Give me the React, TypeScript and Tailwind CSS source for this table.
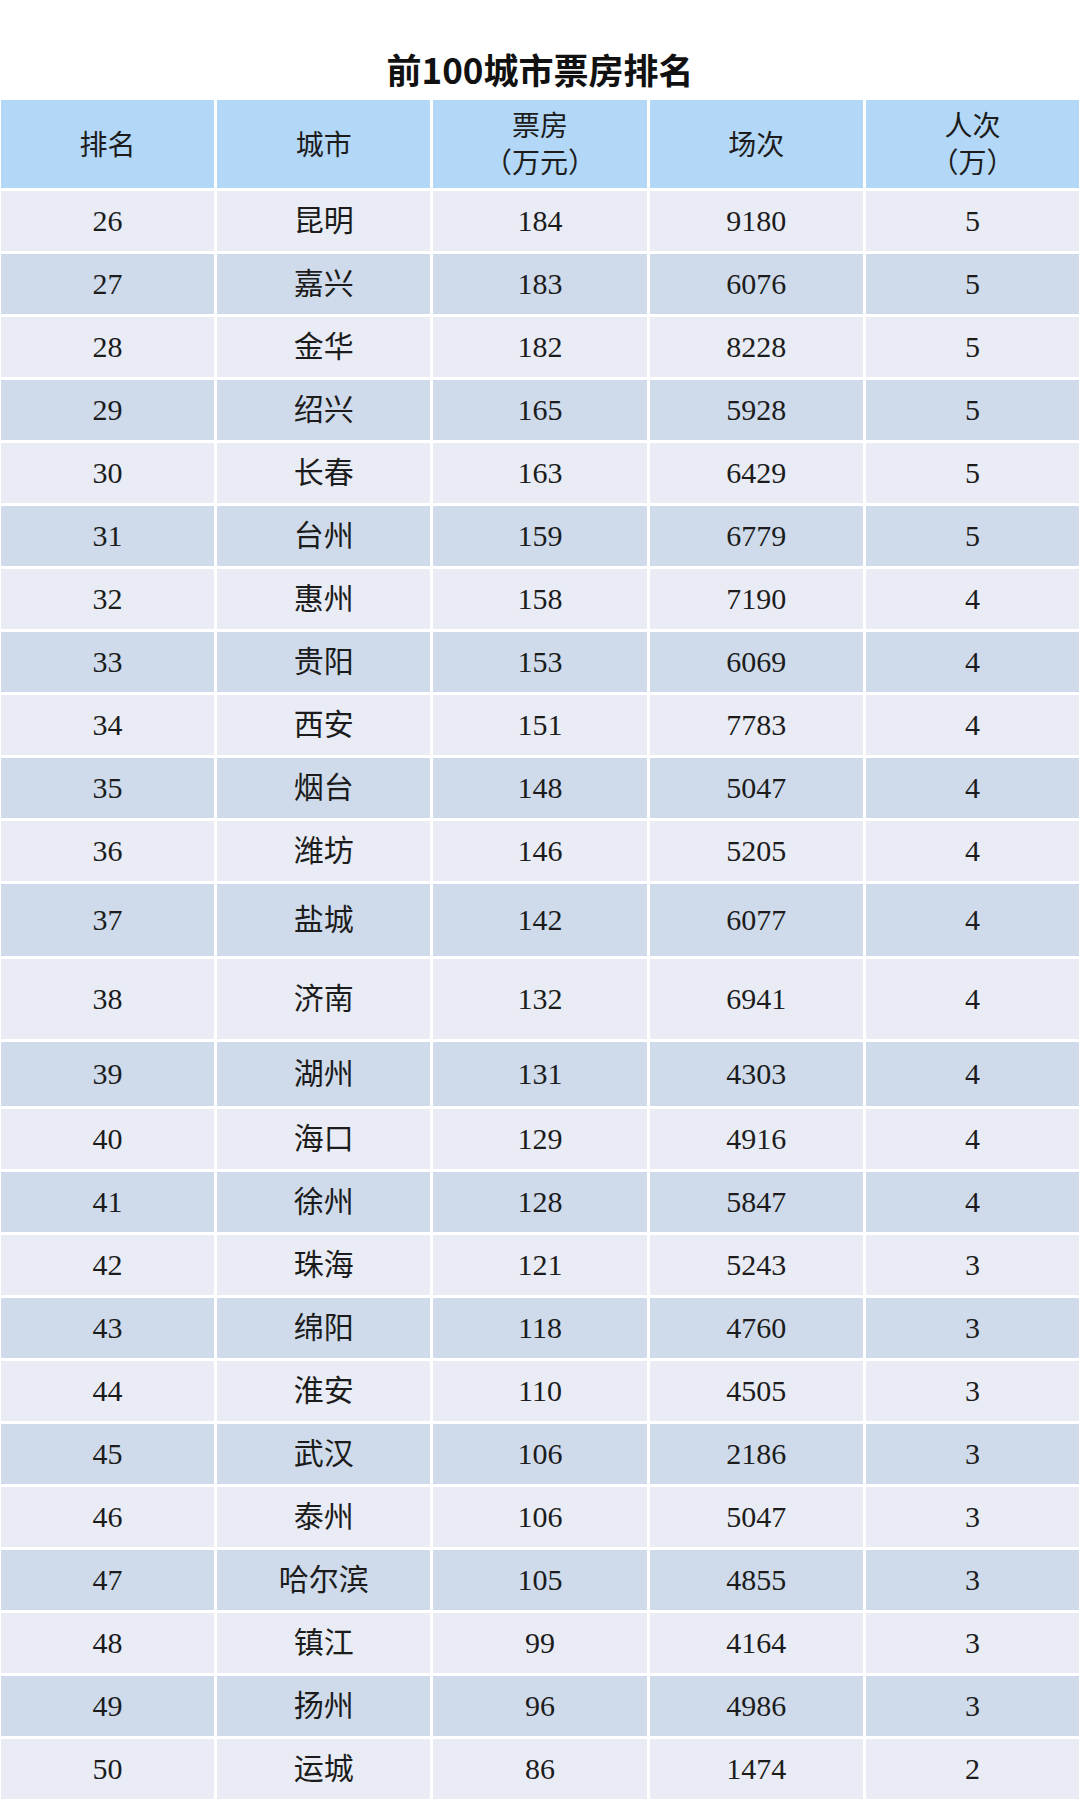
const rows = [
  { rank: 26, city: "昆明", box: 184, shows: 9180, people: 5 },
  { rank: 27, city: "嘉兴", box: 183, shows: 6076, people: 5 },
  { rank: 28, city: "金华", box: 182, shows: 8228, people: 5 },
  { rank: 29, city: "绍兴", box: 165, shows: 5928, people: 5 },
  { rank: 30, city: "长春", box: 163, shows: 6429, people: 5 },
  { rank: 31, city: "台州", box: 159, shows: 6779, people: 5 },
  { rank: 32, city: "惠州", box: 158, shows: 7190, people: 4 },
  { rank: 33, city: "贵阳", box: 153, shows: 6069, people: 4 },
  { rank: 34, city: "西安", box: 151, shows: 7783, people: 4 },
  { rank: 35, city: "烟台", box: 148, shows: 5047, people: 4 },
  { rank: 36, city: "潍坊", box: 146, shows: 5205, people: 4 },
  { rank: 37, city: "盐城", box: 142, shows: 6077, people: 4, h: "h-[72px]" },
  { rank: 38, city: "济南", box: 132, shows: 6941, people: 4, h: "h-[80px]" },
  { rank: 39, city: "湖州", box: 131, shows: 4303, people: 4, h: "h-[64px]" },
  { rank: 40, city: "海口", box: 129, shows: 4916, people: 4 },
  { rank: 41, city: "徐州", box: 128, shows: 5847, people: 4 },
  { rank: 42, city: "珠海", box: 121, shows: 5243, people: 3 },
  { rank: 43, city: "绵阳", box: 118, shows: 4760, people: 3 },
  { rank: 44, city: "淮安", box: 110, shows: 4505, people: 3 },
  { rank: 45, city: "武汉", box: 106, shows: 2186, people: 3 },
  { rank: 46, city: "泰州", box: 106, shows: 5047, people: 3 },
  { rank: 47, city: "哈尔滨", box: 105, shows: 4855, people: 3 },
  { rank: 48, city: "镇江", box: 99, shows: 4164, people: 3 },
  { rank: 49, city: "扬州", box: 96, shows: 4986, people: 3 },
  { rank: 50, city: "运城", box: 86, shows: 1474, people: 2 },
];

const headers = [["排名"], ["城市"], ["票房", "（万元）"], ["场次"], ["人次", "（万）"]];

export default function App() {
  return (
    <div className="w-[1080px] h-[1800px] bg-white overflow-hidden">
      <div className="h-[100px] flex justify-center pt-[51px]">
        <h1 className="text-[35px] leading-none font-bold text-[#111] font-['Noto_Sans_CJK_SC',sans-serif]">
          前100城市票房排名
        </h1>
      </div>

      <div className="flex flex-col gap-[3px] px-[1px] text-[#1c1c1c] font-['Liberation_Serif','Noto_Sans_CJK_SC',serif]">
        {/* header */}
        <div className="grid grid-cols-5 gap-x-[3px] h-[88px]">
          {headers.map((lines, i) => (
            <div
              key={i}
              className="bg-[#b3d7f7] flex flex-col items-center justify-center pt-[2px] text-[28px] leading-[37px]"
            >
              {lines.map((l) => (
                <span key={l}>{l}</span>
              ))}
            </div>
          ))}
        </div>

        {rows.map((r, idx) => {
          const bg = idx % 2 === 0 ? "bg-[#e9ecf5]" : "bg-[#cfdbeb]";
          const cells = [r.rank, r.city, r.box, r.shows, r.people];
          return (
            <div key={r.rank} className={`grid grid-cols-5 gap-x-[3px] ${r.h ?? "h-[60px]"}`}>
              {cells.map((c, i) => (
                <div key={i} className={`${bg} flex items-center justify-center text-[30px] leading-none`}>
                  {c}
                </div>
              ))}
            </div>
          );
        })}
      </div>
    </div>
  );
}
